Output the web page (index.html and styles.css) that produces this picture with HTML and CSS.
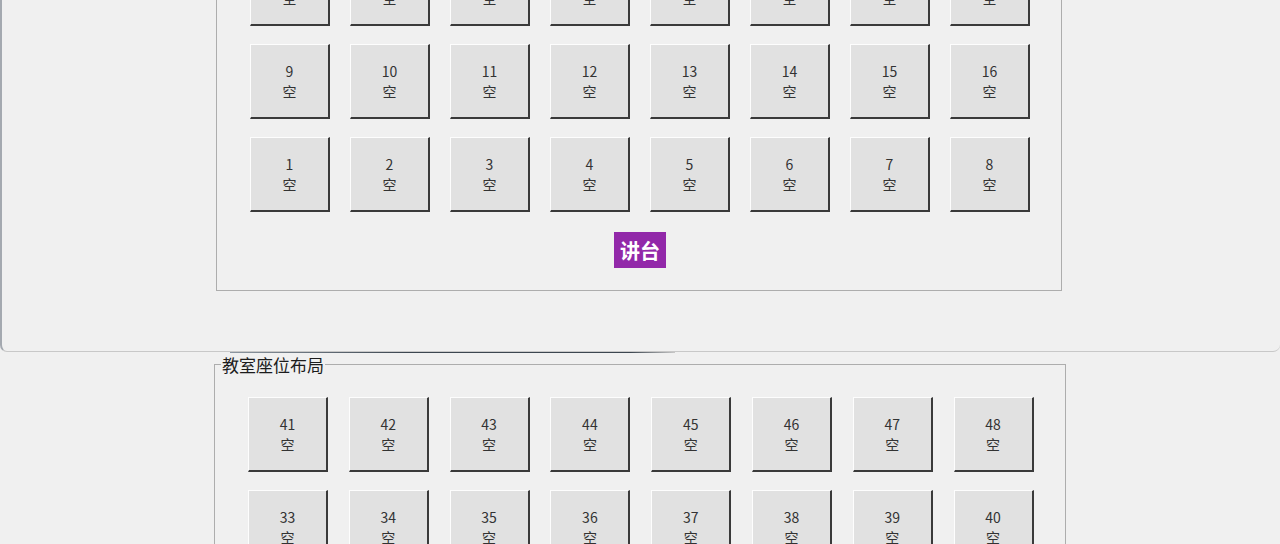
FILE: index.html
```html
<!DOCTYPE html>
<html lang="zh-CN">
<head>
  <meta charset="UTF-8">
  <meta name="viewport" content="width=device-width, initial-scale=1.0">
  <title>教室座位布局</title>
  <link rel="stylesheet" href="styles.css">
</head>
<body>
  <!-- front window: seat layout, scrolled down -->
  <div class="win win-top">
    <div class="group group-top">
      <span class="group-title">教室座位布局</span>
      <div class="seats">
        <button class="seat">17<br>空</button>
        <button class="seat">18<br>空</button>
        <button class="seat">19<br>空</button>
        <button class="seat">20<br>空</button>
        <button class="seat">21<br>空</button>
        <button class="seat">22<br>空</button>
        <button class="seat">23<br>空</button>
        <button class="seat">24<br>空</button>

        <button class="seat">9<br>空</button>
        <button class="seat">10<br>空</button>
        <button class="seat">11<br>空</button>
        <button class="seat">12<br>空</button>
        <button class="seat">13<br>空</button>
        <button class="seat">14<br>空</button>
        <button class="seat">15<br>空</button>
        <button class="seat">16<br>空</button>

        <button class="seat">1<br>空</button>
        <button class="seat">2<br>空</button>
        <button class="seat">3<br>空</button>
        <button class="seat">4<br>空</button>
        <button class="seat">5<br>空</button>
        <button class="seat">6<br>空</button>
        <button class="seat">7<br>空</button>
        <button class="seat">8<br>空</button>
      </div>
      <div class="podium">讲台</div>
    </div>
  </div>

  <!-- window behind -->
  <div class="win win-bottom">
    <div class="group group-bottom">
      <span class="group-title">教室座位布局</span>
      <div class="seats seats-wide">
        <button class="seat">41<br>空</button>
        <button class="seat">42<br>空</button>
        <button class="seat">43<br>空</button>
        <button class="seat">44<br>空</button>
        <button class="seat">45<br>空</button>
        <button class="seat">46<br>空</button>
        <button class="seat">47<br>空</button>
        <button class="seat">48<br>空</button>

        <button class="seat">33<br>空</button>
        <button class="seat">34<br>空</button>
        <button class="seat">35<br>空</button>
        <button class="seat">36<br>空</button>
        <button class="seat">37<br>空</button>
        <button class="seat">38<br>空</button>
        <button class="seat">39<br>空</button>
        <button class="seat">40<br>空</button>
      </div>
    </div>
  </div>
</body>
</html>
```

FILE: styles.css
```css
html, body { margin: 0; padding: 0; overflow: hidden; }
body { background: #f0f0f0; font-family: "Noto Sans CJK SC", "Noto Sans", sans-serif; color: #222; }

.win { box-sizing: border-box; background: #f0f0f0; overflow: hidden; position: relative; }

.win-top {
  height: 352px;
  padding: 0 0 60px 214px;
  border-left: 2px solid #a4a9b0;
  border-bottom: 1px solid #c8c8c8;
  border-radius: 0 0 7px 7px;
}
.win-bottom { height: 192px; padding: 12px 0 0 214px; }
.win-bottom::before {
  content: ""; position: absolute; top: 0; left: 230px; width: 445px; height: 1px;
  background: linear-gradient(90deg, #8c96a0, #3c4650 40%, #3c4650 90%, #c8c8c8);
}

.group { position: relative; box-sizing: border-box; border: 1px solid #adadad; }
.group-title {
  position: absolute; top: -10px; left: 6px; padding: 0 1px;
  background: #f0f0f0; font-size: 17px; line-height: 20px; color: #1c1c1c;
}
.group-top { width: 846px; margin-top: -82px; padding: 32px 31px 22px 33px; }
.group-bottom { width: 852px; padding: 32px 30px 0 33px; }

.seats { display: grid; grid-template-columns: repeat(8, 80px); column-gap: 20px; row-gap: 18px; }
.seats-wide { column-gap: 20.8px; }

.seat {
  box-sizing: border-box; width: 80px; height: 75px; padding: 0;
  background: #e1e1e1; color: #333;
  border-style: solid; border-width: 1px 2px 2px 1px;
  border-color: #fdfdfd #3a3a3a #3a3a3a #fdfdfd;
  font-family: inherit; font-size: 14px; line-height: 20px;
}

.podium {
  width: 52px; height: 36px; margin: 20px auto 0;
  background: #9228a9; color: #fff; font-weight: bold; font-size: 20px;
  display: flex; align-items: center; justify-content: center;
}
```
